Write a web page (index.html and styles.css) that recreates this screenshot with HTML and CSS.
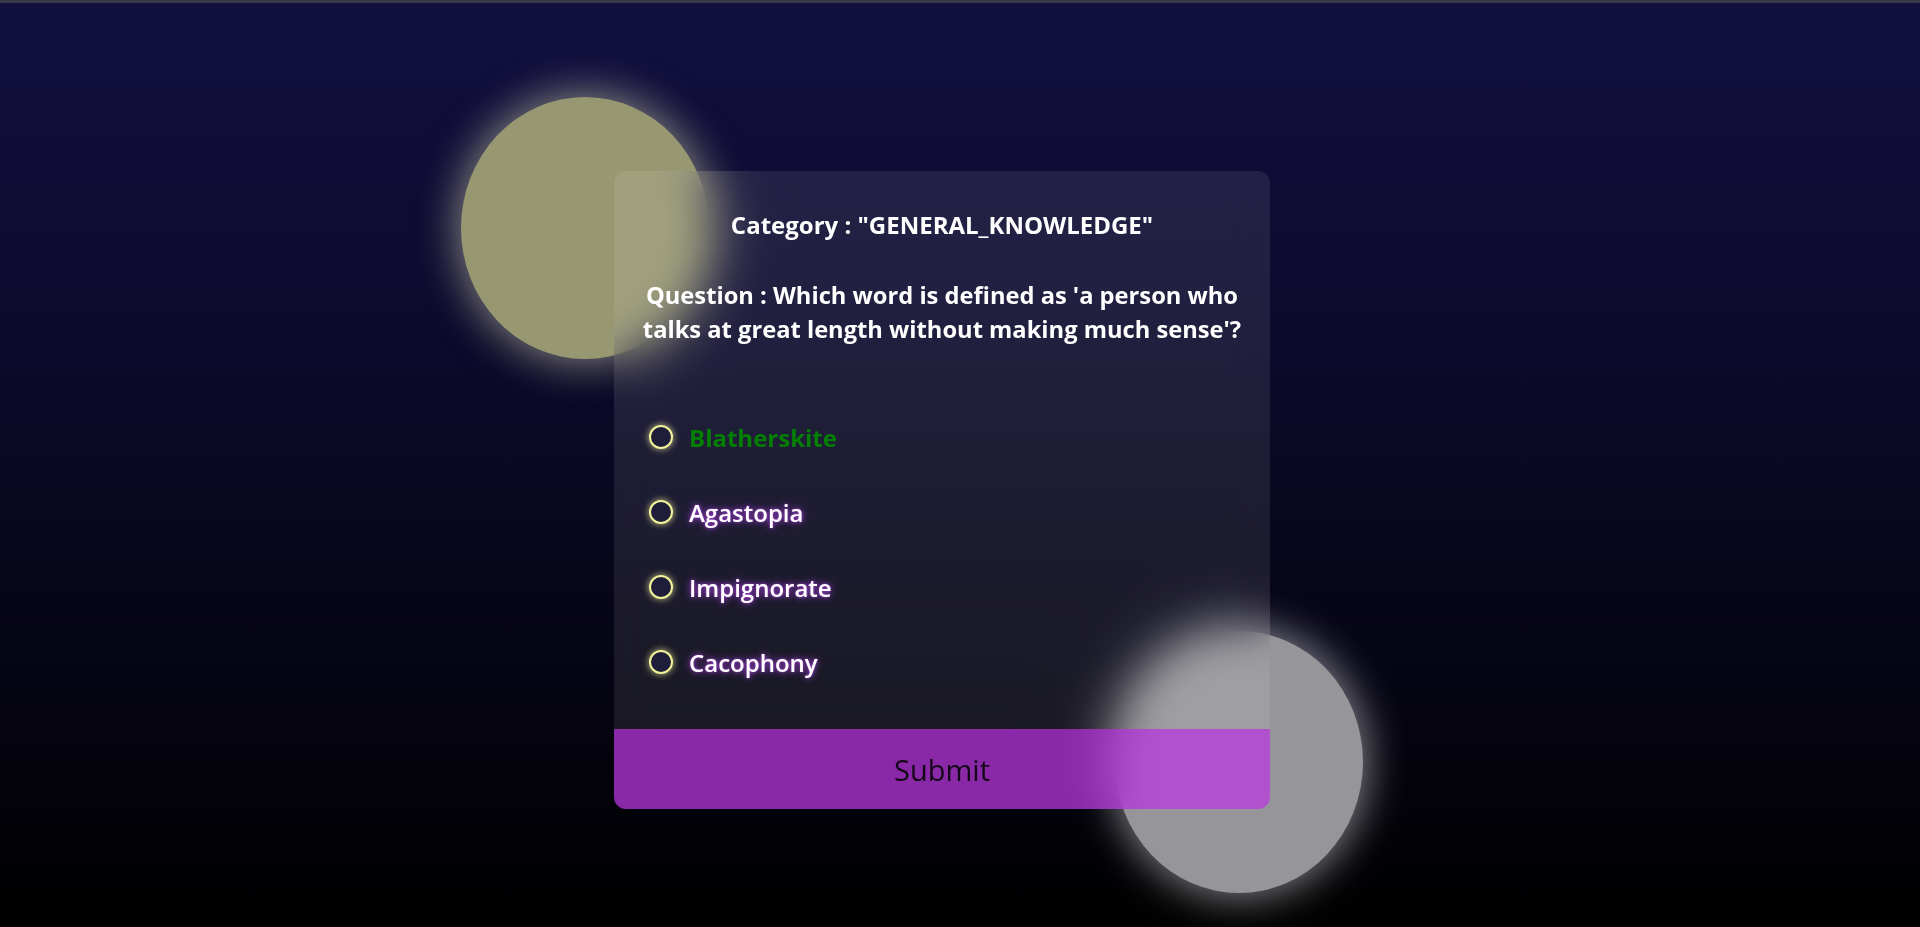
FILE: index.html
```html
<!DOCTYPE html>
<html lang="en">
<head>
<meta charset="utf-8">
<title>Quiz</title>
<link rel="stylesheet" href="styles.css">
</head>
<body>
<div class="page">
  <div class="orb orb-yellow"></div>
  <div class="orb orb-gray"></div>
  <main class="stage">
    <section class="card">
      <div class="card-body">
        <h2 class="category">Category : "GENERAL_KNOWLEDGE"</h2>
        <h3 class="question">Question : Which word is defined as 'a person who talks at great length without making much sense'?</h3>
        <ul class="options">
          <li class="option"><span class="radio"></span><span class="opt-text correct">Blatherskite</span></li>
          <li class="option"><span class="radio"></span><span class="opt-text">Agastopia</span></li>
          <li class="option"><span class="radio"></span><span class="opt-text">Impignorate</span></li>
          <li class="option"><span class="radio"></span><span class="opt-text">Cacophony</span></li>
        </ul>
      </div>
      <button class="submit">Submit</button>
    </section>
  </main>
</div>
</body>
</html>
```

FILE: styles.css
```css
* { box-sizing: border-box; }
html, body { margin: 0; padding: 0; height: 100%; }
body {
  font-family: "Open Sans", "Noto Sans", sans-serif;
  background: #000;
  overflow: hidden;
}
.page {
  position: relative;
  height: 100vh;
  border-top: 3px solid #383a48;
  background: linear-gradient(180deg, #12103f 0%, #0c0a2b 38%, #000 100%);
  overflow: hidden;
}
.orb {
  position: absolute;
  width: 248px;
  height: 262px;
  border-radius: 50%;
}
.orb-yellow {
  left: 461px;
  top: 94px;
  background: #979772;
  box-shadow: 0 0 40px 4px rgba(230, 230, 190, 0.55);
}
.orb-gray {
  left: 1115px;
  top: 628px;
  background: #96969a;
  box-shadow: 0 0 40px 4px rgba(240, 240, 245, 0.55);
}
.stage {
  position: relative;
  display: flex;
  justify-content: center;
  padding: 168px 36px 0 0;
}
.card {
  width: 656px;
  height: 638px;
  border-radius: 12px;
  overflow: hidden;
  background: rgba(255, 255, 255, 0.085);
  backdrop-filter: blur(22px);
  -webkit-backdrop-filter: blur(22px);
  display: flex;
  flex-direction: column;
}
.card-body {
  flex: 1;
  padding: 38px 22px 0;
  color: #fff;
}
.category {
  margin: 0;
  text-align: center;
  font-size: 24px;
  font-weight: 700;
  line-height: 32px;
}
.question {
  margin: 37px 0 0;
  text-align: center;
  font-size: 23.7px;
  font-weight: 700;
  line-height: 34px;
}
.options {
  list-style: none;
  margin: 75px 0 0 13px;
  padding: 0;
  display: flex;
  flex-direction: column;
  gap: 43px;
}
.option {
  display: flex;
  align-items: center;
  gap: 16px;
  height: 32px;
}
.radio {
  width: 24px;
  height: 24px;
  border-radius: 50%;
  border: 2px solid #f2f29a;
  background: #1f1e3a;
  box-shadow: 0 0 6px 1px rgba(240, 240, 150, 0.6);
  flex: none;
}
.opt-text {
  font-size: 24px;
  font-weight: 600;
  color: #fff;
  text-shadow: 0 0 7px #b048e8, 0 0 2px #a040d0;
}
.opt-text.correct {
  color: #038003;
  font-weight: 700;
  text-shadow: none;
}
.submit {
  height: 80px;
  border: 0;
  margin: 0;
  width: 100%;
  background: rgba(184, 50, 224, 0.71);
  color: #140818;
  font-family: "Open Sans", "Noto Sans", sans-serif;
  font-size: 29px;
  font-weight: 400;
}
```
